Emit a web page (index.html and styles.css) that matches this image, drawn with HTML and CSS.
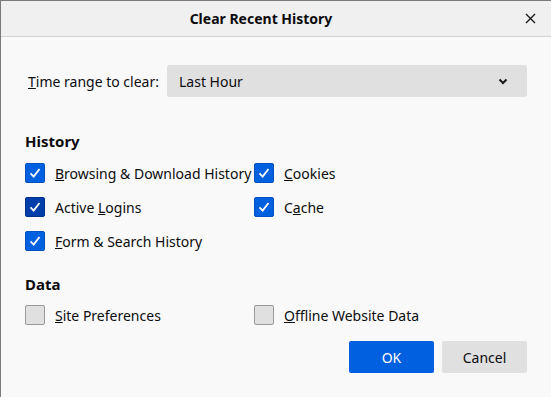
FILE: index.html
```html
<!DOCTYPE html>
<html lang="en">
<head>
    <meta charset="UTF-8">
    <title>Clear Recent History</title>
    <link rel="stylesheet" href="styles.css">
</head>
<body>
    <div class="dialog">
        <div class="titlebar">
            <span class="title">Clear Recent History</span>
            <button class="close" aria-label="Close">
                <svg width="11" height="11" viewBox="0 0 11 11"><path d="M1 1 L10 10 M10 1 L1 10" stroke="#1a1a1a" stroke-width="1.4" fill="none"/></svg>
            </button>
        </div>

        <div class="content">
            <div class="time-row">
                <label class="time-label"><u>T</u>ime range to clear:</label>
                <div class="select">
                    <span>Last Hour</span>
                    <svg width="10" height="7" viewBox="0 0 10 7"><path d="M1.5 1.5 L5 5 L8.5 1.5" stroke="#1a1a1a" stroke-width="2" fill="none"/></svg>
                </div>
            </div>

            <h3 class="section">History</h3>
            <div class="options">
                <div class="option"><span class="box checked"><svg viewBox="0 0 20 20"><path d="M5 10.5 L8.5 14 L15 5.5" /></svg></span><span><u>B</u>rowsing &amp; Download History</span></div>
                <div class="option"><span class="box checked"><svg viewBox="0 0 20 20"><path d="M5 10.5 L8.5 14 L15 5.5" /></svg></span><span><u>C</u>ookies</span></div>
                <div class="option"><span class="box checked hover"><svg viewBox="0 0 20 20"><path d="M5 10.5 L8.5 14 L15 5.5" /></svg></span><span>Active <u>L</u>ogins</span></div>
                <div class="option"><span class="box checked"><svg viewBox="0 0 20 20"><path d="M5 10.5 L8.5 14 L15 5.5" /></svg></span><span>C<u>a</u>che</span></div>
                <div class="option"><span class="box checked"><svg viewBox="0 0 20 20"><path d="M5 10.5 L8.5 14 L15 5.5" /></svg></span><span><u>F</u>orm &amp; Search History</span></div>
            </div>

            <h3 class="section data">Data</h3>
            <div class="options">
                <div class="option"><span class="box"></span><span><u>S</u>ite Preferences</span></div>
                <div class="option"><span class="box"></span><span><u>O</u>ffline Website Data</span></div>
            </div>

            <div class="buttons">
                <button class="btn primary">OK</button>
                <button class="btn">Cancel</button>
            </div>
        </div>
    </div>
</body>
</html>
```

FILE: styles.css
```css
body {
    margin: 0;
    font-family: "Noto Sans", "Open Sans", sans-serif;
    font-size: 14px;
    color: #0c0c0d;
}
.dialog {
    width: 551px;
    height: 397px;
    box-sizing: border-box;
    border-left: 1px solid #7a7a7a;
    border-top: 1px solid #7a7a7a;
    background-color: #f9f9fa;
}
.titlebar {
    position: relative;
    height: 35px;
    background-color: #f0f0f0;
    border-bottom: 1px solid #d2d2d2;
    display: flex;
    align-items: center;
    justify-content: center;
    padding-right: 30px;
}
.title {
    font-weight: bold;
    font-size: 14px;
}
.close {
    position: absolute;
    right: 15px;
    top: 12px;
    border: none;
    background: none;
    padding: 0;
    width: 11px;
    height: 11px;
    display: flex;
}
.content {
    padding: 28px 24px 0 24px;
}
.time-row {
    display: flex;
    align-items: center;
}
.time-label {
    margin-left: 3px;
    width: 139px;
}
.select {
    flex: 1;
    height: 32px;
    background-color: #e0e0e1;
    border-radius: 2px;
    display: flex;
    align-items: center;
    justify-content: space-between;
    padding: 0 19px 0 12px;
}
.section {
    font-size: 15px;
    font-weight: bold;
    margin: 34px 0 12px 0;
}
.section.data {
    margin-top: 23px;
    margin-bottom: 11px;
}
.options {
    display: grid;
    grid-template-columns: 229px 1fr;
    row-gap: 14px;
}
.option {
    display: flex;
    align-items: center;
    height: 20px;
}
.box {
    width: 18px;
    height: 18px;
    border: 1px solid #9a9a9a;
    border-radius: 2px;
    background-color: #e0e0e1;
    margin-right: 10px;
    display: flex;
}
.box.checked {
    background-color: #0060df;
    border-color: #0050c0;
}
.box.hover {
    background-color: #003eaa;
    border-color: #00308a;
}
.box svg {
    width: 18px;
    height: 18px;
}
.box svg path {
    stroke: #fff;
    stroke-width: 2;
    fill: none;
}
.buttons {
    display: flex;
    justify-content: flex-end;
    gap: 8px;
    margin-top: 16px;
}
.btn {
    width: 85px;
    height: 32px;
    border: none;
    border-radius: 2px;
    background-color: #e0e0e1;
    font-family: inherit;
    font-size: 14px;
    color: #0c0c0d;
}
.btn.primary {
    background-color: #0060df;
    color: #fff;
}
```
